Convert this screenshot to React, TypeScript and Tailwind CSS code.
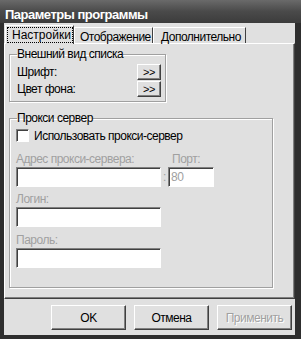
import React from "react";

const raised =
  "border border-t-white border-l-white border-r-[#404040] border-b-[#404040] shadow-[inset_-1px_-1px_0_#808080]";
const sunken =
  "border border-t-[#808080] border-l-[#808080] border-r-white border-b-white shadow-[inset_1px_1px_0_#404040] bg-white";

function Btn({ children, disabled, className = "" }: { children: React.ReactNode; disabled?: boolean; className?: string }) {
  return (
    <div className={`${raised} bg-[#e0e0e0] flex items-center justify-center ${className}`}>
      <span className={disabled ? "text-[#a0a0a0] [text-shadow:1px_1px_0_#fff]" : ""}>{children}</span>
    </div>
  );
}

export default function App() {
  return (
    <div className="w-[301px] h-[339px] bg-[#2e2e2e] flex flex-col font-['Liberation_Sans',Arial,sans-serif] text-[12px] tracking-[-0.5px] leading-[14px] text-black select-none">
      {/* Title bar */}
      <div className="h-[23px] shrink-0 bg-gradient-to-b from-[#6a6a6a] via-[#4a4a4a] to-[#3c3c3c] pl-[5px] pt-[8px] text-white font-bold text-[13px] leading-[13px]">
        Параметры программы
      </div>
      {/* Client */}
      <div className="ml-[4px] mr-[6px] mb-[4px] flex-1 bg-[#e0e0e0] flex flex-col">
        {/* Tabs */}
        <div className="h-[21px] -mb-[1px] flex items-end pl-[1px] relative z-10">
          <div className="w-[69px] h-[19px] border-t border-l border-r border-t-white border-l-white border-r-[#404040] bg-[#e0e0e0] pt-[1px] pl-[1px]">
            <div className="w-[66px] h-[16px] border border-dotted border-black pl-[4px] leading-[14px] tracking-normal">Настройки</div>
          </div>
          <div className="w-[79px] h-[16px] mb-[1px] border-t border-l border-r border-t-white border-l-white border-r-[#404040] pl-[5px] pt-[2px] leading-[14px]">
            Отображение
          </div>
          <div className="w-[93px] h-[16px] mb-[1px] border-t border-l border-r border-t-white border-l-white border-r-[#404040] pl-[7px] pt-[2px] leading-[14px]">
            Дополнительно
          </div>
        </div>
        {/* Panel */}
        <div className="h-[256px] shrink-0 border border-t-white border-l-white border-r-[#404040] border-b-[#404040] shadow-[inset_-1px_-1px_0_#808080] pl-[4px] pt-[4px]">
          <fieldset className="w-[157px] border border-[#a0a0a0] shadow-[1px_1px_0_#fff,inset_1px_1px_0_#fff] pb-[4px]">
            <legend className="ml-[7px] leading-[12px]">Внешний вид списка</legend>
            <div className="flex flex-col gap-[1px] pl-[7px] pr-[4px] pt-[4px]">
              <div className="flex items-center justify-between h-[16px]">
                <span>Шрифт:</span>
                <Btn className="w-[24px] h-[16px] text-[11px]">&gt;&gt;</Btn>
              </div>
              <div className="flex items-center justify-between h-[16px]">
                <span>Цвет фона:</span>
                <Btn className="w-[24px] h-[16px] text-[11px]">&gt;&gt;</Btn>
              </div>
            </div>
          </fieldset>
          <fieldset className="mt-[10px] w-[264px] border border-[#a0a0a0] shadow-[1px_1px_0_#fff,inset_1px_1px_0_#fff] pb-[19px]">
            <legend className="ml-[7px] leading-[12px]">Прокси сервер</legend>
            <div className="pl-[6px]">
              <div className="flex items-center gap-[5px] mt-[5px] h-[13px]">
                <div className={`w-[13px] h-[13px] ${sunken}`} />
                <span>Использовать прокси-сервер</span>
              </div>
              <div className="flex items-end mt-[10px] text-[#a0a0a0]">
                <div className="flex flex-col">
                  <span className="leading-[14px]">Адрес прокси-сервера:</span>
                  <div className={`mt-[1px] w-[145px] h-[20px] ${sunken}`} />
                </div>
                <div className="w-[7px] h-[20px] flex items-center justify-center">:</div>
                <div className="flex flex-col">
                  <span className="pl-[4px] leading-[14px]">Порт:</span>
                  <div className={`mt-[1px] w-[46px] h-[20px] ${sunken} pl-[2px] flex items-center`}>80</div>
                </div>
              </div>
              <div className="flex flex-col mt-[5px] text-[#a0a0a0]">
                <span className="leading-[14px]">Логин:</span>
                <div className={`mt-[1px] w-[145px] h-[20px] ${sunken}`} />
              </div>
              <div className="flex flex-col mt-[6px] text-[#a0a0a0]">
                <span className="leading-[14px]">Пароль:</span>
                <div className={`mt-[1px] w-[145px] h-[20px] ${sunken}`} />
              </div>
            </div>
          </fieldset>
        </div>
        {/* Buttons */}
        <div className="flex justify-end gap-[8px] pr-[3px] mt-[6px]">
          <Btn className="w-[75px] h-[25px]">OK</Btn>
          <Btn className="w-[75px] h-[25px]">Отмена</Btn>
          <Btn className="w-[75px] h-[25px]" disabled>Применить</Btn>
        </div>
      </div>
    </div>
  );
}
